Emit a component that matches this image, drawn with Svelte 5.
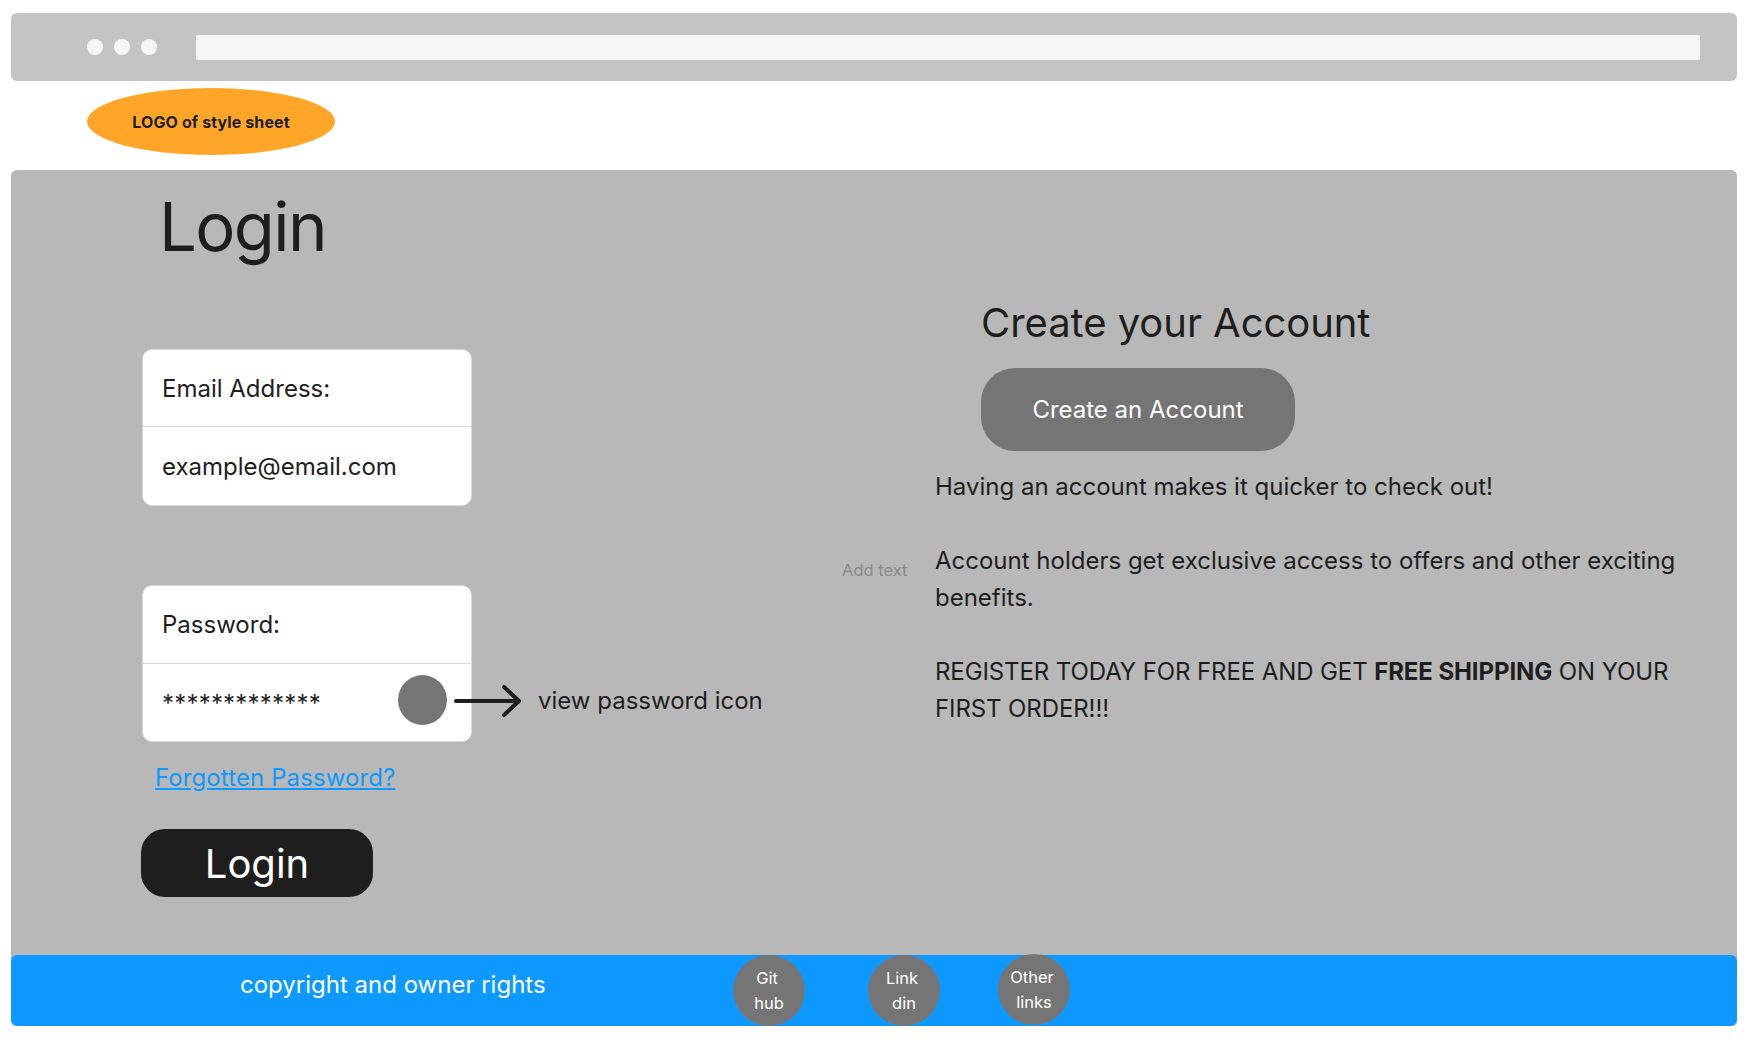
<script>
	let dots = [0, 1, 2];
	let socials = [
		['Git', 'hub'],
		['Link', 'din'],
		['Other', 'links']
	];
</script>

<div class="page">
	<div class="browser">
		<div class="dots">
			{#each dots as d (d)}
				<span class="dot"></span>
			{/each}
		</div>
		<div class="address"></div>
	</div>

	<div class="logo-row">
		<div class="logo">LOGO of style sheet</div>
	</div>

	<div class="panel">
		<main class="content">
			<section class="login">
				<h1>Login</h1>

				<div class="card email">
					<div class="row label">Email Address:</div>
					<div class="row value">example@email.com</div>
				</div>

				<div class="password-line">
					<div class="card">
						<div class="row label tall">Password:</div>
						<div class="row secret">
							<span class="stars">*************</span>
							<span class="eye"></span>
						</div>
					</div>
					<div class="note">
						<svg width="68" height="32" viewBox="0 0 68 32" fill="none">
							<path d="M2 16H65M50 2L65 16L50 30" stroke="#1e1e1e" stroke-width="4" stroke-linecap="round" stroke-linejoin="round" />
						</svg>
						<span>view password icon</span>
					</div>
				</div>

				<a class="forgot" href="#forgot">Forgotten Password?</a>
				<button class="login-btn">Login</button>
			</section>

			<section class="register">
				<h2>Create your Account</h2>
				<button class="create-btn">Create an Account</button>
				<div class="blurb">
					<span class="add-text">Add text</span>
					<p>
						Having an account makes it quicker to check out!<br /><br />
						Account holders get exclusive access to offers and other exciting benefits.<br /><br />
						<span class="caps">REGISTER TODAY FOR FREE AND GET <strong>FREE SHIPPING</strong> ON YOUR FIRST ORDER!!!</span>
					</p>
				</div>
			</section>
		</main>

		<footer>
			<span class="copyright">copyright and owner rights</span>
			<div class="socials">
				{#each socials as s (s[0])}
					<a class="social" href="#social">
						<span class="first">{s[0]}</span>
						<span>{s[1]}</span>
					</a>
				{/each}
			</div>
		</footer>
	</div>
</div>

<style>
	:global(body) {
		background: #fff;
	}

	.page {
		width: 1726px;
		padding: 13px 15px 20px 11px;
		font-family: Inter, 'Liberation Sans', sans-serif;
		font-weight: 425;
		color: #1e1e1e;
	}

	.browser {
		height: 68px;
		background: #c4c4c4;
		border-radius: 6px;
		display: flex;
		align-items: center;
		padding-left: 76px;
		padding-right: 37px;
		box-sizing: border-box;
	}

	.dots {
		display: flex;
		gap: 11px;
		margin-right: 39px;
	}

	.dot {
		width: 16px;
		height: 16px;
		border-radius: 50%;
		background: #f6f6f6;
	}

	.address {
		flex: 1;
		height: 25px;
		background: #f6f6f6;
		border-radius: 2px;
	}

	.logo-row {
		padding: 7px 0 15px 76px;
	}

	.logo {
		width: 248px;
		height: 67px;
		border-radius: 50%;
		background: #ffa629;
		display: flex;
		align-items: center;
		justify-content: center;
		font-size: 16px;
		font-weight: 700;
		letter-spacing: 0.1px;
	}

	.panel {
		background: #b8b8b8;
		border-radius: 6px;
	}

	.content {
		height: 785px;
		display: flex;
	}

	.login {
		width: 797px;
		padding-left: 130px;
		box-sizing: border-box;
	}

	h1 {
		margin: 0;
		height: 83px;
		padding: 18px 0 0 18px;
		font-size: 67px;
		font-weight: 425;
		line-height: 78px;
		letter-spacing: -1.6px;
	}

	.card {
		width: 330px;
		margin-left: 1px;
		background: #fff;
		border: 1px solid #d9d9d9;
		border-radius: 10px;
		box-sizing: border-box;
		font-size: 24px;
	}

	.email {
		margin-top: 78px;
	}

	.row {
		height: 77px;
		display: flex;
		align-items: center;
		padding-left: 19px;
		box-sizing: border-box;
	}

	.value {
		height: 78px;
	}

	.label {
		border-bottom: 1px solid #d9d9d9;
	}

	.tall {
		height: 78px;
	}

	.secret {
		justify-content: space-between;
		padding-right: 24px;
	}

	.stars {
		padding-top: 2px;
		letter-spacing: 0.2px;
	}

	.eye {
		width: 49px;
		height: 50px;
		margin-bottom: 5px;
		border-radius: 50%;
		background: #757575;
	}

	.password-line {
		margin-top: 79px;
		display: flex;
		align-items: flex-end;
	}

	.note {
		height: 78px;
		padding-bottom: 5px;
		box-sizing: border-box;
		display: flex;
		align-items: center;
		gap: 16px;
		margin-left: -18px;
		font-size: 24px;
		position: relative;
	}

	.forgot {
		display: block;
		width: max-content;
		margin: 18px 0 0 14px;
		color: #0d99ff;
		font-size: 24px;
		line-height: 36px;
		letter-spacing: 0.1px;
	}

	.login-btn {
		display: block;
		width: 232px;
		height: 68px;
		margin-top: 33px;
		background: #1e1e1e;
		color: #fff;
		border: none;
		border-radius: 24px;
		font-family: inherit;
		font-weight: inherit;
		font-size: 40px;
		padding: 0;
	}

	.register {
		flex: 1;
		padding-left: 173px;
		box-sizing: border-box;
	}

	h2 {
		margin: 0;
		padding-top: 129px;
		font-size: 40px;
		font-weight: 425;
		line-height: 48px;
		letter-spacing: -0.05px;
	}

	.create-btn {
		display: block;
		width: 314px;
		height: 83px;
		margin-top: 21px;
		background: #757575;
		color: #fff;
		border: none;
		border-radius: 34px;
		font-family: inherit;
		font-weight: inherit;
		font-size: 24px;
		padding: 0;
	}

	.blurb {
		display: flex;
		margin-left: -139px;
		margin-top: 17px;
	}

	.add-text {
		width: 93px;
		flex: none;
		margin-top: 92px;
		font-size: 16.5px;
		line-height: 20px;
		color: #8a8a8a;
	}

	p {
		margin: 0;
		width: 760px;
		font-size: 24px;
		line-height: 37px;
	}

	.caps {
		letter-spacing: -0.1px;
	}

	footer {
		height: 71px;
		background: #0d99ff;
		border-radius: 6px;
		display: flex;
		color: #fff;
	}

	.copyright {
		width: 722px;
		box-sizing: border-box;
		padding: 12px 0 0 229px;
		font-size: 24px;
		line-height: 36px;
	}

	.socials {
		display: flex;
		gap: 63px;
	}

	.social {
		width: 72px;
		height: 71px;
		border-radius: 50%;
		background: #757575;
		color: #fff;
		text-decoration: none;
		display: flex;
		flex-direction: column;
		align-items: center;
		justify-content: center;
		font-size: 16.5px;
		line-height: 25px;
	}

	.social:last-child {
		margin: -1px 0 0 -5px;
	}

	.first {
		padding-right: 4px;
	}
</style>
